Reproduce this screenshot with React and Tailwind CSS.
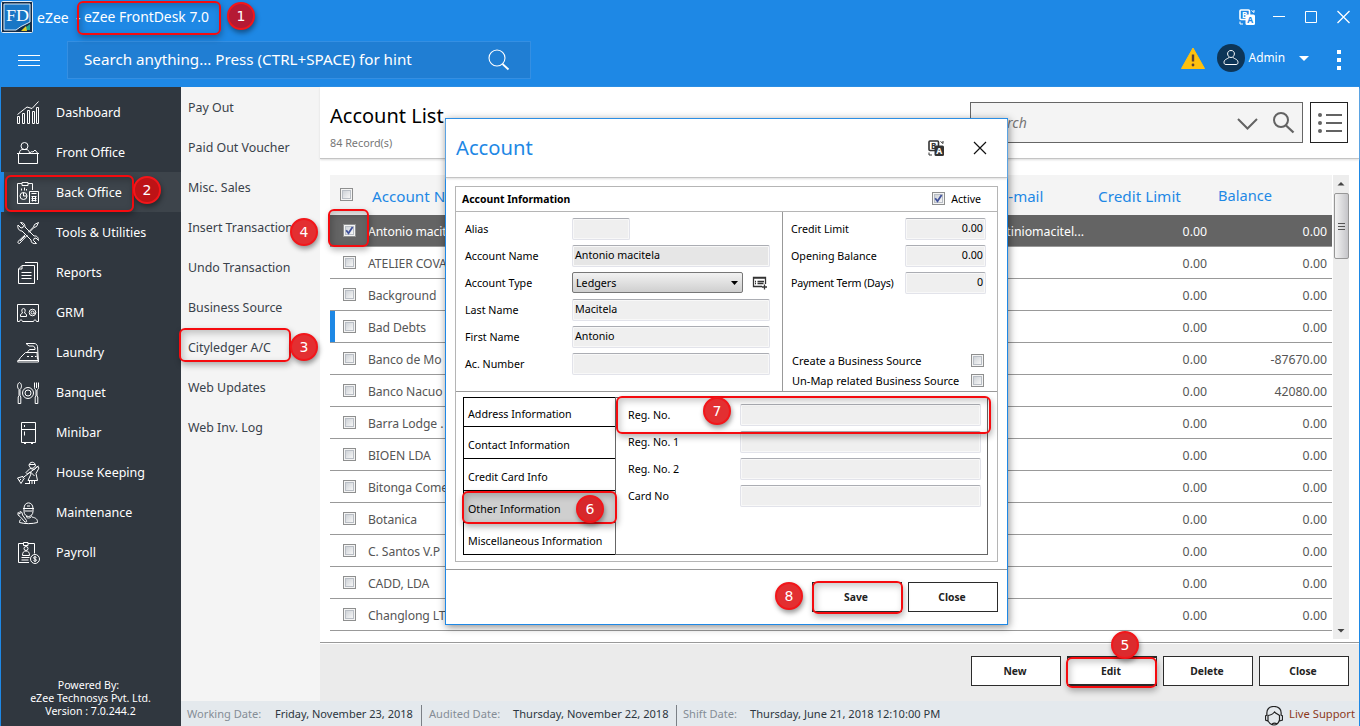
import { useState } from 'react';
import clsx from 'clsx';

const icons = {
    dashboard: (
        <>
            <path d="M.5 14.5h2v7h-2zM5.5 11.5h2v10h-2zM10.5 8.5h2v13h-2zM15.5 9.5h2v12h-2zM19.5 5.500h2v16h-2z" />
            <path d="M.5 12.500L10 5l5 1.500L21.500-.5" />
        </>
    ),
    front: (
        <>
            <path d="M0 11.500h22M1.500 12v9.500h19V12" />
            <circle cx="7.500" cy="4" r="3.500" />
            <path d="M2.500 11c0-3 2-3.500 3.500-3.500h3c2 0 3 1 3.500 3.500M13 11c1-1.500 1.500-1.500 3-1l2-2 2.500 3" />
        </>
    ),
    back: (
        <>
            <path d="M5 1.500H.5v20h12M11 1.500h4.500V8M5 .5h6v3H5z" />
            <circle cx="6.500" cy="14" r="3.500" />
            <path d="M6.500 10.500V14H10M4.500 8.500v-2M7.500 8.500v-3M9.500 8.500v-1.500M12.500 9.500h9v12h-9zM14.500 11.500h5M14.500 14.500h5M14.500 16.500h5M14.500 18.500h5M15.500 14v5.500M18.500 14v5.500" />
        </>
    ),
    tools: (
        <>
            <path d="M3.500.5l3 3-.5 2-2 .5-3-3c-.8 3 1 6 4 6l9 9c0 3 2 4 5.500 3.500l-3-3 .5-2 2-.5 2.500 2.500c0-3-1.500-5-4.500-4.500L8 5c0-3-1.500-4.500-4.500-4.500z" />
            <path d="M21.500.5l-4 2-1 2.500-5 5M21.500.5l-2 4-2.500 1-5 5M9 12l-8 7.500c-.5 1.500.5 2 1.500 2L10.500 13M3 19l5-5" />
        </>
    ),
    reports: (
        <>
            <path d="M5 3.500h12.500v18h-16V7zM5 3.500V7H1.500M8 .5h12.500V18M4.500 10.500h10M4.500 13.500h10M4.500 16.500h10" />
        </>
    ),
    grm: (
        <>
            <path d="M.5 2.500h21v17h-2c0-2-3-2-3 0h-11c0-2-3-2-3 0h-2z" />
            <path d="M3.500 14.500v-2l2-1.500c-1-2-1-4.500 1-4.500s2 2.500 1 4.500l2 1.500v2z" />
            <circle cx="15.500" cy="10.500" r="3.300" />
            <path d="M17 10.500a1.500 1.500 0 1 1-3 0 1.500 1.500 0 0 1 3 0c0 1.500 1.500 1.500 1.800 0" />
        </>
    ),
    laundry: (
        <>
            <path d="M9 1.500h8c2 0 3 1 3.500 3l1 15.500H.5l3-4.500 5-5h12M10.500 10l2-2.500h5.500V6l-1.500-2H12M9 1.500l3 2.500M.5 18.500h21" />
            <path d="M10 14.500h2M14 14.500h2M18 14.500h1.500M20 10.500l.500 7" />
        </>
    ),
    banquet: (
        <>
            <circle cx="11" cy="11" r="5.500" />
            <circle cx="11" cy="11" r="3" />
            <path d="M2.500.5c-2.500 1-2.500 5.500-.5 7v6l-.8 1.500v6.500h2.600V15L3 13.500v-6c2-1.500 2-6-.5-7zM17.500.5v5c0 1.500 1 2 1.500 2.500v6l-.8 1v6.500h2.600V15l-.8-1V8c.5-.5 1.500-1 1.500-2.500v-5M19.500.5V6" />
        </>
    ),
    minibar: <path d="M4.500.5h14v20h-14zM4.500 7.500h14M7.500 3v2M7.500 9.500v4M7 21.500h2M14 21.500h2" />,
    house: (
        <>
            <path d="M12 4c0-5 6.500-5 6.500 0M12 2.500h6M12.500 4c0 3 5 3 5.500 0M13 6.500l-4 4 1.500 1.500 2.500-2 1 2-3 6.500h9.500l-1.500-7 3-5.500-1.500-2-3 3.500zM21.500 4l-16 12M5 14l2.500 2.500M5.500 14.500L.5 16l3.500 5.500 3-5M2 19l2-2M12.500 19v3M15 19v3M17.500 19v3M8 21.500h4M13.500 10l4 4" />
        </>
    ),
    maintenance: (
        <>
            <path d="M6 6.500h11M7 6.500c0-7.500 9-7.500 9 0M10 4h3M7 6.500v3c0 3 2.500 5 4.500 5s4.500-2 4.500-5v-3M7.500 9h8M9.500 14c0 2 1 2 2 2 2 0 3-1 3-2.500M15 15c4 1 5.500 2 5.500 5.500-5 1.500-13 1.500-18 0 0-2 .5-2.500 1.500-3" />
            <path d="M1 10.500v2.500l2 1.500 5 5.500c1.500.5 2-.5 1.500-1.500L5.500 13l-.5-2.500-2-1v2.500z" />
        </>
    ),
    payroll: (
        <>
            <path d="M12 20.500H1.500v-19h5M11 1.500h6.500v10M6.500.5h4.500v3H6.500z" />
            <circle cx="9" cy="6.500" r="2" />
            <path d="M5.500 13.500c0-3 1-4.500 3.500-4.500s3.500 1.500 3.500 4.500zM4.500 15.500h8M4.500 18h7" />
            <circle cx="18" cy="17" r="4.500" />
            <path d="M19.500 15.500c-1-1-3-.8-3 .3 0 1.500 3 1 3 2.400 0 1.200-2.200 1.300-3 .3M18 14v6" />
        </>
    ),
};

const menu = [
    ['Dashboard', 'dashboard'],
    ['Front Office', 'front'],
    ['Back Office', 'back'],
    ['Tools & Utilities', 'tools'],
    ['Reports', 'reports'],
    ['GRM', 'grm'],
    ['Laundry', 'laundry'],
    ['Banquet', 'banquet'],
    ['Minibar', 'minibar'],
    ['House Keeping', 'house'],
    ['Maintenance', 'maintenance'],
    ['Payroll', 'payroll'],
];

const submenu = [
    'Pay Out',
    'Paid Out Voucher',
    'Misc. Sales',
    'Insert Transaction',
    'Undo Transaction',
    'Business Source',
    'Cityledger A/C',
    'Web Updates',
    'Web Inv. Log',
];

const accounts = [
    { name: 'Antonio macit', email: 'antiniomacitel...', balance: '0.00' },
    { name: 'ATELIER COVA', balance: '0.00' },
    { name: 'Background', balance: '0.00' },
    { name: 'Bad Debts', balance: '0.00', marked: true },
    { name: 'Banco de Mo', balance: '-87670.00' },
    { name: 'Banco Nacuo', balance: '42080.00' },
    { name: 'Barra Lodge .', balance: '0.00' },
    { name: 'BIOEN LDA', balance: '0.00' },
    { name: 'Bitonga Come', balance: '0.00' },
    { name: 'Botanica', balance: '0.00' },
    { name: 'C. Santos V.P', balance: '0.00' },
    { name: 'CADD, LDA', balance: '0.00' },
    { name: 'Changlong LT', balance: '0.00' },
];

const tabs = [
    'Address Information',
    'Contact Information',
    'Credit Card Info',
    'Other Information',
    'Miscellaneous Information',
];

const outlines = [
    'left-[77px] top-[1px] w-[144px] h-[34px]',
    'left-[5px] top-[175px] w-[129px] h-[37px]',
    'left-[179px] top-[328px] w-[112px] h-[34px]',
    'left-[328px] top-[209px] w-[41px] h-[38px]',
    'left-[1066px] top-[657px] w-[91px] h-[31px]',
    'left-[462px] top-[491px] w-[155px] h-[33px]',
    'left-[616px] top-[396px] w-[375px] h-[38px]',
    'left-[812px] top-[581px] w-[91px] h-[33px]',
];

const badges = [
    'left-[227px] top-[2px] bg-[#b51a34]',
    'left-[133px] top-[176px] bg-[#bd1316]',
    'left-[290px] top-[333px] bg-[#e32f31]',
    'left-[290px] top-[218px] bg-[#e32f31]',
    'left-[1111px] top-[631px] bg-[#dc2b2e]',
    'left-[576px] top-[495px] bg-[#d7282b]',
    'left-[703px] top-[397px] bg-[#e32f31]',
    'left-[775px] top-[582px] bg-[#e32f31]',
];

function Checkbox({ checked }) {
    return (
        <span className="block size-[13px] shrink-0 border border-[#8e8f8f] bg-[#f4f4f4] p-px">
            <span className="block size-full border border-[#b9bec5] bg-linear-to-br from-[#cfd3d8] to-[#f6f6f6]">
                {checked && (
                    <svg viewBox="0 0 9 9" className="-mt-px -ml-px size-[9px]" fill="none" stroke="#42539b" strokeWidth="1.8">
                        <path d="M1.200 4.200l2.300 3L7.600 1" />
                    </svg>
                )}
            </span>
        </span>
    );
}

function TranslateIcon({ color, letter }) {
    return (
        <svg viewBox="0 0 16 16" className="size-4" fill="none">
            <rect x="1" y="1" width="9.500" height="9.500" rx="1" stroke={color} strokeWidth="1.600" />
            <text x="3" y="8.500" fontSize="8" fontWeight="700" fill={color}>B</text>
            <rect x="6.500" y="5.500" width="9.500" height="10.500" rx="1.500" fill={color} />
            <text x="8.300" y="14" fontSize="8.500" fontWeight="700" fill={letter}>A</text>
            <path d="M12.500 1.500l2.500 2M15 1v2.500M1 12.500v2.500h3" stroke={color} />
        </svg>
    );
}

function Button({ children, active }) {
    return (
        <button className={clsx('h-[30px] w-[90px] border border-[#2b2b2b] bg-white pt-px pr-[2px] text-[10.3px] font-bold text-[#222]', active && 'border-y-2')}>
            {children}
        </button>
    );
}

function Field({ value, width = 'w-[198px]', right, dark }) {
    return (
        <div
            className={clsx(
                'flex h-[22px] items-start rounded-xs border border-[#e2e3ea] border-t-[#abadb3] px-[2px] pt-px leading-4 shadow-[inset_0_0_0_1px_#f8f8f8]',
                width,
                right && 'justify-end',
                dark ? 'bg-[#e6e6e6]' : 'bg-[#efefef]'
            )}
        >
            {value}
        </div>
    );
}

function Row({ label, labelWidth = 'w-[107px]', children }) {
    return (
        <div className="flex h-[27px] items-start">
            <span className={clsx('pt-[3px] leading-4 whitespace-nowrap', labelWidth)}>{label}</span>
            {children}
        </div>
    );
}

function Header() {
    return (
        <header className="h-[87px] shrink-0 bg-[#1e88e5] text-white">
            <div className="flex h-[34px] items-center justify-between">
                <div className="flex h-full items-center">
                    <svg viewBox="0 0 32 32" className="ml-px size-8">
                        <rect x=".5" y=".5" width="31" height="31" rx="1" fill="#132c49" stroke="#e8eef4" />
                        <path d="M3 3h26v18l-9 4.500-5 3.500H3z" fill="#1976c5" stroke="#d5e8f8" />
                        <path d="M21 29l8-6v6z" fill="#23a38f" />
                        <path d="M20 30l5-5 1 5z" fill="#e8cc27" />
                        <text x="5" y="20" fill="#fff" fontFamily="Liberation Serif" fontSize="17" textLength="23" lengthAdjust="spacingAndGlyphs">FD</text>
                    </svg>
                    <span className="ml-[4px] w-[47px] text-[14px] whitespace-pre">eZee  - </span>
                    <span className="pt-px text-[13.9px]">eZee FrontDesk 7.0</span>
                </div>
                <div className="mr-[7px] flex items-center">
                    <TranslateIcon color="#fff" letter="#1e88e5" />
                    <svg viewBox="0 0 80 14" className="ml-[18px] h-[14px] w-20" fill="none" stroke="#fff" strokeWidth="1">
                        <path d="M0 6.500h12M32.500 1.500h11v11h-11z" />
                        <path d="M64.500 1l12 12M76.500 1l-12 12" strokeWidth="1.300" />
                    </svg>
                </div>
            </div>
            <div className="flex justify-between pt-[7px]">
                <div className="flex">
                    <div className="mt-[14px] ml-[18px] flex h-[11px] w-[22px] flex-col justify-between">
                        <span className="h-px bg-white" />
                        <span className="h-px bg-white" />
                        <span className="h-px bg-white" />
                    </div>
                    <div className="ml-[27px] flex h-[38px] w-[464px] items-center justify-between border border-[#358fe2] bg-[#207ed3] pr-[20px] pl-4">
                        <span className="pb-[2px] text-[15.2px]">Search anything... Press (CTRL+SPACE) for hint</span>
                        <svg viewBox="0 0 22 22" className="size-[22px]" fill="none" stroke="#fff">
                            <circle cx="9" cy="9" r="8" strokeWidth="1.100" />
                            <path d="M14.500 15l6 5.500" strokeWidth="1.800" />
                        </svg>
                    </div>
                </div>
                <div className="flex h-[34px] items-center">
                    <svg viewBox="0 0 24 22" className="mr-3 h-[22px] w-6">
                        <path d="M12 1l11.500 20.500H.5z" fill="#ffc10e" stroke="#ffc10e" strokeLinejoin="round" />
                        <path d="M12 7.500v7" stroke="#5d4037" strokeWidth="2.400" />
                        <circle cx="12" cy="18" r="1.400" fill="#5d4037" />
                    </svg>
                    <svg viewBox="0 0 28 28" className="size-7" fill="none" stroke="#fff">
                        <circle cx="14" cy="14" r="14" fill="#0d3557" stroke="none" />
                        <path d="M14 6.500c-5 0-4 7 0 7s5-7 0-7zM12 13c0 2-5 1.500-5 5.500 0 1 .5 2 2 2h10c1.500 0 2-1 2-2 0-4-5-3.500-5-5.500" />
                    </svg>
                    <span className="ml-1 text-[11.9px]">Admin</span>
                    <svg viewBox="0 0 10 5" className="mt-px ml-[14px] h-[5px] w-[10px]" fill="#fff">
                        <path d="M0 0h10L5 5z" />
                    </svg>
                    <div className="mt-[3px] mr-[19px] ml-[28px] flex flex-col gap-1">
                        <span className="size-1 bg-white" />
                        <span className="size-1 bg-white" />
                        <span className="size-1 bg-white" />
                    </div>
                </div>
            </div>
        </header>
    );
}

function Sidebar() {
    return (
        <aside className="flex w-[181px] shrink-0 flex-col border-l border-[#1e88e5] bg-[#30373f] pt-[5px] text-white">
            {menu.map(([label, icon]) => (
                <div
                    key={label}
                    className={clsx('flex h-10 items-center', label === 'Back Office' ? 'border-l-3 border-[#1e88e5] bg-[#3d444b] pl-[13px]' : 'pl-4')}
                >
                    <svg viewBox="0 0 22 22" className="mt-px size-[22px] overflow-visible" fill="none" stroke="#fff">
                        {icons[icon]}
                    </svg>
                    <span className="ml-[17px] pt-[2px] text-[12.5px]">{label}</span>
                </div>
            ))}
            <div className="mt-auto mb-2 -ml-px text-center text-[10.6px] leading-[13px]">
                <span className="pr-1">Powered By:</span>
                <br />
                eZee Technosys Pvt. Ltd.
                <br />
                Version : 7.0.244.2
            </div>
        </aside>
    );
}

function AccountList() {
    return (
        <div className="flex min-w-0 flex-1 flex-col border-r border-[#1e88e5] bg-white">
            <div className="flex h-[72px] shrink-0 justify-between border-b border-[#c4c4c4] pl-[10px] shadow-[0_1px_2px_#ddd]">
                <div className="pt-[14px]">
                    <h1 className="text-[20px] leading-[30px] text-black">Account List</h1>
                    <p className="mt-1 text-[10.8px] leading-4 text-[#777]">84 Record(s)</p>
                </div>
                <div className="mt-[15px] mr-[11px] flex gap-[7px]">
                    <div className="flex h-[41px] w-[333px] items-center border border-[#666] bg-[#f4f4f4] pr-[5px] pl-[14px]">
                        <span className="flex-1 text-[14px] text-[#777] italic">Search</span>
                        <svg viewBox="0 0 60 24" className="h-6 w-[60px]" fill="none" stroke="#636363" strokeWidth="2">
                            <path d="M1 8l9.500 9.500L20 8" />
                            <circle cx="44" cy="9" r="7" />
                            <path d="M48.500 14l8 7.500" strokeWidth="2.300" />
                        </svg>
                    </div>
                    <div className="flex h-[41px] w-[38px] items-center justify-center border border-[#222] pl-px">
                        <svg viewBox="0 0 24 20" className="h-5 w-6" stroke="#636363" strokeWidth="2">
                            <path d="M8 2h16M8 10h16M8 18h16" />
                            <g fill="#636363" stroke="none">
                                <circle cx="2" cy="2" r="2" />
                                <circle cx="2" cy="10" r="2" />
                                <circle cx="2" cy="18" r="2" />
                            </g>
                        </svg>
                    </div>
                </div>
            </div>

            <div className="flex h-[484px] shrink-0 border-b border-[#999] pt-4 pl-[10px]">
                <div className="w-[1002px]">
                    <div className="flex h-10 items-center bg-[#f4f4f4] pt-[2px] pl-[10px] text-[#1e88e5]">
                        <span className="mb-[3px]">
                            <Checkbox />
                        </span>
                        <span className="ml-[19px] w-[73px] text-[15.200px] whitespace-nowrap">Account N</span>
                        <span className="ml-[555px] w-[98px] text-[15px]">E-mail</span>
                        <span className="w-[120px] text-[15.3px]">Credit Limit</span>
                        <span className="text-[14.600px]">Balance</span>
                    </div>
                    {accounts.map((a, i) => (
                        <div
                            key={a.name}
                            className={clsx(
                                'flex h-8 items-center border-b border-[#999] pr-[5px] text-[12.3px]',
                                i === 0 ? 'bg-[#646464] text-white' : 'text-[#555]'
                            )}
                        >
                            <span className={clsx('mr-2 h-full w-[5px]', a.marked && 'bg-[#1e88e5]')} />
                            <span className={i === 0 ? '' : 'mb-px'}>
                                <Checkbox checked={i === 0} />
                            </span>
                            <span className="ml-3 pt-[3px] text-[12.2px] tracking-[-0.1px] whitespace-nowrap">{a.name}</span>
                            <span className="ml-auto w-[200px] pt-[3px] text-right">{a.email}</span>
                            <span className="w-[123px] pt-[3px] text-right">0.00</span>
                            <span className="w-[120px] pt-[3px] text-right">{a.balance}</span>
                        </div>
                    ))}
                </div>
                <div className="ml-px flex h-[464px] w-4 flex-col items-center bg-[#ededed]">
                    <svg viewBox="0 0 16 18" className="h-[18px] w-4" fill="#444">
                        <path d="M4.500 10.500L8 7l3.500 3.500z" />
                    </svg>
                    <div className="flex h-[66px] w-[15px] flex-col items-center justify-center gap-px rounded-xs border border-[#979797] bg-linear-to-r from-[#f3f3f3] via-[#dcdcde] to-[#c5c5c9]">
                        <span className="h-px w-[7px] bg-[#555]" />
                        <span className="mt-px h-px w-[7px] bg-[#555]" />
                        <span className="mt-px h-px w-[7px] bg-[#555]" />
                    </div>
                    <svg viewBox="0 0 16 18" className="mt-auto h-[18px] w-4" fill="#444">
                        <path d="M4.500 8h7L8 11.500z" />
                    </svg>
                </div>
            </div>

            <div className="flex flex-1 justify-end gap-[6px] border-t border-white bg-[#ebebeb] pt-[12px] pr-[10px]">
                <Button>New</Button>
                <Button active>Edit</Button>
                <Button>Delete</Button>
                <Button>Close</Button>
            </div>
        </div>
    );
}

function StatusBar() {
    return (
        <footer className="flex h-[25px] shrink-0 items-center justify-between border-r border-[#1e88e5] bg-[#e4e9ed] pl-[6px] text-[11.1px] whitespace-nowrap text-[#2c3640]">
            <div className="flex h-full items-center pt-[2px]">
                <span className="w-[88px] text-[#858d96]">Working Date:</span>
                <span className="w-[146px] text-[11px]">Friday, November 23, 2018</span>
                <span className="mt-[3px] mr-[7px] h-[22px] w-px bg-[#7b8086]" />
                <span className="w-[84px] text-[#858d96]">Audited Date:</span>
                <span className="w-[163px]">Thursday, November 22, 2018</span>
                <span className="mt-[3px] mr-[6px] h-[22px] w-px bg-[#7b8086]" />
                <span className="w-[67px] text-[#858d96]">Shift Date:</span>
                <span>Thursday, June 21, 2018 12:10:00 PM</span>
            </div>
            <div className="flex items-center text-[11.200px] text-[#8c3a1c]">
                <svg viewBox="0 0 18 20" className="mt-1 mr-[6px] h-5 w-[18px]" fill="none" stroke="#222" strokeWidth="1.200">
                    <path d="M2 9C1 3 4.500.5 9 .5S17 3 16 9l1.500 1v4l-3 1M2 9L.5 10v4l2.500 1V9.500C6 9 8 8 9.500 6c1.500 1.500 3 2 5 3.500V14c-1 3-3.500 5-5.500 5s-4.500-1.500-6-4M7 18c2-1.500 3-1.500 5 0" />
                </svg>
                <span className="mr-[4px] pt-[2px]">Live Support</span>
            </div>
        </footer>
    );
}

function AccountDialog() {
    const [tab, setTab] = useState('Other Information');

    return (
        <div className="absolute top-[118px] left-[445px] flex h-[507px] w-[563px] flex-col border border-[#1e88e5] bg-white text-[10.7px] text-black shadow-[1px_2px_8px_rgba(0,0,0,0.45)]">
            <div className="flex h-[59px] shrink-0 items-center justify-between border-b border-[#c4c4c4] pr-5 pl-[10px] shadow-[0_1px_2px_#ddd]">
                <h2 className="pb-px text-[20.200px] text-[#1e88e5]">Account</h2>
                <div className="flex items-center gap-[29px]">
                    <TranslateIcon color="#333" letter="#fff" />
                    <svg viewBox="0 0 14 14" className="size-[14px]" fill="none" stroke="#111" strokeWidth="1.200">
                        <path d="M1 1l12 12M13 1L1 13" />
                    </svg>
                </div>
            </div>

            <div className="mt-2 ml-[9px] h-[376px] w-[543px] shrink-0 border border-[#b5b5b5]">
                <div className="flex h-[25px] items-center justify-between border-b border-[#b5b5b5] pr-4 pl-[6px]">
                    <span className="pt-[2px] text-[10.4px] font-bold">Account Information</span>
                    <span className="flex items-center gap-[6px] text-[10.600px]">
                        <Checkbox checked />
                        <span className="pt-[2px]">Active</span>
                    </span>
                </div>
                <div className="flex h-[180px] border-b border-[#999]">
                    <div className="w-[328px] border-r border-[#999] pt-[6px] pl-[9px]">
                        <Row label="Alias"><Field width="w-[58px]" /></Row>
                        <Row label="Account Name"><Field value="Antonio macitela" dark /></Row>
                        <Row label="Account Type">
                            <div className="flex h-[21px] w-[171px] items-center justify-between rounded-xs border border-[#777] bg-linear-to-b from-[#f2f2f2] to-[#cfcfcf] pt-px pr-1 pl-[3px]">
                                Ledgers
                                <svg viewBox="0 0 7 4" className="h-1 w-[7px]"><path d="M0 0h7L3.500 4z" /></svg>
                            </div>
                            <svg viewBox="0 0 16 14" className="mt-1 ml-[9px] h-[14px] w-4" fill="none" stroke="#333">
                                <path d="M10 10.500H1.500v-9h12V8M1 2h13M3 5.500h1M5.500 5.500h6.500M3 7.500h1M5.500 7.500h6M12.500 8.500v5M10 11h5" strokeWidth="1.300" />
                            </svg>
                        </Row>
                        <Row label="Last Name"><Field value="Macitela" /></Row>
                        <Row label="First Name"><Field value="Antonio" /></Row>
                        <Row label="Ac. Number"><Field /></Row>
                    </div>
                    <div className="flex-1 pt-[6px] pr-[11px] pl-2">
                        <Row label="Credit Limit" labelWidth="w-[114px]"><Field value="0.00" width="w-[81px]" right /></Row>
                        <Row label="Opening Balance" labelWidth="w-[114px]"><Field value="0.00" width="w-[81px]" right /></Row>
                        <Row label="Payment Term (Days)" labelWidth="w-[114px] tracking-[-0.2px]"><Field value="0" width="w-[81px]" right /></Row>
                        <div className="mt-[51px] flex h-5 items-center justify-between pr-[2px] pl-px text-[11px]">
                            <span className="pt-[2px]">Create a Business Source</span>
                            <Checkbox />
                        </div>
                        <div className="flex h-5 items-center justify-between pr-[2px] pl-px text-[11px]">
                            <span className="pt-[2px]">Un-Map related Business Source</span>
                            <Checkbox />
                        </div>
                    </div>
                </div>
                <div className="mt-[5px] ml-[7px] flex h-[158px] w-[525px] border border-[#666] border-l-0">
                    <div className="-mt-px w-[153px] border-r border-[#666]">
                        {tabs.map((t, i) => (
                            <div
                                key={t}
                                onClick={() => setTab(t)}
                                className={clsx(
                                    'flex items-center border-b border-l border-black pl-[4px]',
                                    i === 0 ? 'h-[30px] border-t' : 'h-8',
                                    tab === t && 'bg-[#cfcfcf]'
                                )}
                            >
                                <span className={i === 0 ? 'pt-1' : 'pt-[5px]'}>{t}</span>
                            </div>
                        ))}
                    </div>
                    <div className="pt-[6px] pl-3">
                        <Row label="Reg. No." labelWidth="w-[112px]"><Field width="w-[241px]" /></Row>
                        <Row label="Reg. No. 1" labelWidth="w-[112px]"><Field width="w-[241px]" /></Row>
                        <Row label="Reg. No. 2" labelWidth="w-[112px]"><Field width="w-[241px]" /></Row>
                        <Row label="Card No" labelWidth="w-[112px]"><Field width="w-[241px]" /></Row>
                    </div>
                </div>
            </div>

            <div className="mt-[7px] flex flex-1 justify-end gap-[6px] border-t border-[#999] pt-3 pr-[9px]">
                <Button>Save</Button>
                <Button>Close</Button>
            </div>
        </div>
    );
}

export default function App() {
    return (
        <div className="relative flex h-[726px] w-[1360px] flex-col overflow-hidden font-['Noto_Sans',sans-serif]">
            <Header />
            <div className="flex min-h-0 flex-1">
                <Sidebar />
                <div className="flex min-w-0 flex-1 flex-col">
                    <div className="flex min-h-0 flex-1">
                        <nav className="w-[139px] shrink-0 bg-[#f4f4f4] pl-[7px] text-[12.4px] whitespace-nowrap text-[#39414a]">
                            {submenu.map((item) => (
                                <div key={item} className="flex h-10 items-center pt-[2px]">{item}</div>
                            ))}
                        </nav>
                        <AccountList />
                    </div>
                    <StatusBar />
                </div>
            </div>

            <AccountDialog />

            {/* Step markers */}
            {outlines.map((pos) => (
                <div key={pos} className={clsx('absolute rounded-md border-2 border-[#f50b0f] shadow-[1px_3px_6px_rgba(0,0,0,0.3),inset_2px_3px_7px_rgba(0,0,0,0.22)]', pos)} />
            ))}
            {badges.map((pos, i) => (
                <div
                    key={pos}
                    className={clsx('absolute flex size-7 items-center justify-center rounded-full border-2 border-[#f2161a] font-["DejaVu_Sans",sans-serif] text-[14px] text-white shadow-[1px_3px_5px_rgba(0,0,0,0.4)]', pos)}
                >
                    {i + 1}
                </div>
            ))}
        </div>
    );
}
